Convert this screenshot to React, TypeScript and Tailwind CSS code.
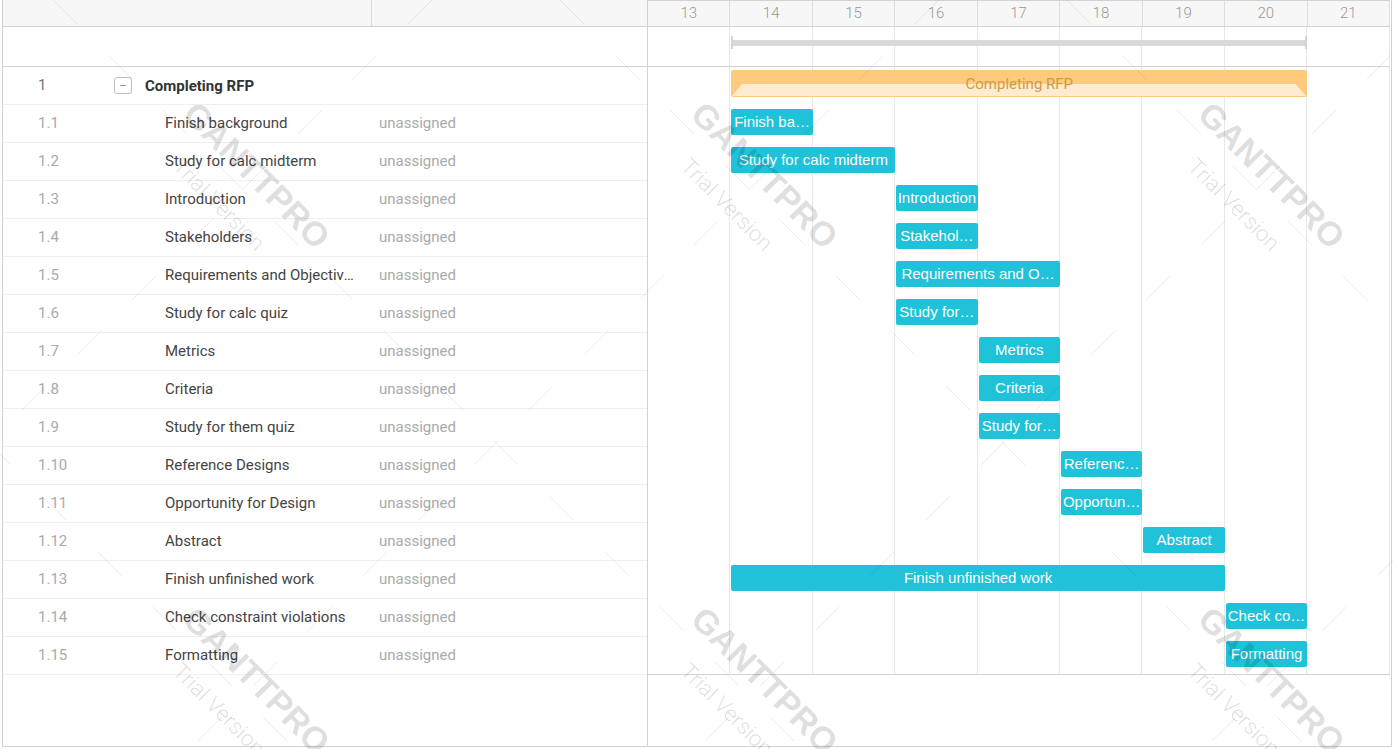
import React from "react";

const DAY = 82.4;

type Task = { id: string; name: string; label: string; start: number; dur: number };

const tasks: Task[] = [
  { id: "1.1", name: "Finish background", label: "Finish ba…", start: 14, dur: 1 },
  { id: "1.2", name: "Study for calc midterm", label: "Study for calc midterm", start: 14, dur: 2 },
  { id: "1.3", name: "Introduction", label: "Introduction", start: 16, dur: 1 },
  { id: "1.4", name: "Stakeholders", label: "Stakehol…", start: 16, dur: 1 },
  { id: "1.5", name: "Requirements and Objectives", label: "Requirements and O…", start: 16, dur: 2 },
  { id: "1.6", name: "Study for calc quiz", label: "Study for…", start: 16, dur: 1 },
  { id: "1.7", name: "Metrics", label: "Metrics", start: 17, dur: 1 },
  { id: "1.8", name: "Criteria", label: "Criteria", start: 17, dur: 1 },
  { id: "1.9", name: "Study for them quiz", label: "Study for…", start: 17, dur: 1 },
  { id: "1.10", name: "Reference Designs", label: "Referenc…", start: 18, dur: 1 },
  { id: "1.11", name: "Opportunity for Design", label: "Opportun…", start: 18, dur: 1 },
  { id: "1.12", name: "Abstract", label: "Abstract", start: 19, dur: 1 },
  { id: "1.13", name: "Finish unfinished work", label: "Finish unfinished work", start: 14, dur: 6 },
  { id: "1.14", name: "Check constraint violations", label: "Check co…", start: 20, dur: 1 },
  { id: "1.15", name: "Formatting", label: "Formatting", start: 20, dur: 1 },
];

const days = [13, 14, 15, 16, 17, 18, 19, 20, 21];

const gridBg =
  "bg-[repeating-linear-gradient(to_right,transparent_0px,transparent_81.4px,#e8e8e8_81.4px,#e8e8e8_82.4px)]";

function Watermark() {
  const clusters = [
    [242, 190],
    [750, 190],
    [1257, 190],
    [242, 695],
    [750, 695],
    [1257, 695],
  ];
  const back: number[] = [];
  for (let k = -2; k <= 3; k++) back.push(53 + 507 * k);
  const fwd: number[] = [];
  for (let k = 0; k <= 4; k++) fwd.push(432 + 507 * k);
  return (
    <svg
      className="absolute inset-0 pointer-events-none"
      width={1393}
      height={749}
      viewBox="0 0 1393 749"
    >
      <g stroke="#000" strokeOpacity={0.08} strokeWidth={1} strokeDasharray="34 44">
        {back.map((c) => (
          <line key={"b" + c} x1={c} y1={0} x2={c + 749} y2={749} />
        ))}
        {fwd.map((c) => (
          <line key={"f" + c} x1={c} y1={0} x2={c - 749} y2={749} />
        ))}
      </g>
      {clusters.map(([cx, cy]) => (
        <g key={cx + "-" + cy} transform={`translate(${cx} ${cy}) rotate(45)`}>
          <text
            x={0}
            y={-9}
            textAnchor="middle"
            fontFamily="'Liberation Sans', Arial, sans-serif"
            fontWeight={700}
            fontSize={34}
            fill="#000"
            fillOpacity={0.14}
          >
            GANTTPRO
          </text>
          <text
            x={-6}
            y={34}
            textAnchor="middle"
            fontFamily="'Roboto', sans-serif"
            fontWeight={300}
            fontSize={22}
            fill="#000"
            fillOpacity={0.14}
          >
            Trial Version
          </text>
        </g>
      ))}
    </svg>
  );
}

export default function App() {
  return (
    <div className="relative w-[1393px] h-[749px] bg-white overflow-hidden font-['Roboto',sans-serif]">
      <div className="ml-[2px] w-[1390px] h-[747px] border-l border-r border-b border-[#d2d2d2] flex">
        {/* Left grid */}
        <div className="w-[645px] shrink-0 border-r border-[#d2d2d2] flex flex-col">
          <div className="h-[27px] flex bg-[#f7f7f7] border-b border-[#d2d2d2]">
            <div className="w-[369px] border-r border-[#dadada]" />
            <div className="flex-1" />
          </div>
          <div className="h-[40px] border-b border-[#d2d2d2]" />
          <div className="h-[38px] flex items-center border-b border-[#efefef] text-[15px]">
            <div className="w-[111px] pl-[35px] text-[#777]">1</div>
            <div className="w-[258px] flex items-center">
              <div className="w-[18px] h-[17px] border border-[#bdbdbd] rounded-[3px] flex items-center justify-center">
                <div className="w-[6px] h-px bg-[#999]" />
              </div>
              <span className="ml-[13px] font-bold text-[#333] mt-px">Completing RFP</span>
            </div>
          </div>
          {tasks.map((t) => (
            <div
              key={t.id}
              className="h-[38px] flex items-center border-b border-[#efefef] text-[15px]"
            >
              <div className="w-[111px] pl-[35px] text-[#aaa]">{t.id}</div>
              <div className="w-[258px] pl-[51px] pr-[14px] text-[#444] truncate">{t.name}</div>
              <div className="pl-[7px] text-[#aaa]">unassigned</div>
            </div>
          ))}
          <div className="flex-1" />
        </div>

        {/* Right gantt */}
        <div className="flex-1 flex flex-col">
          <div className="w-[742px] h-[27px] grid grid-cols-9 bg-[#f7f7f7] border-t border-b border-[#d2d2d2]">
            {days.map((d) => (
              <div
                key={d}
                className="border-r border-[#dcdcdc] flex items-center justify-center text-[15px] text-[#999] font-light"
              >
                {d}
              </div>
            ))}
          </div>
          <div className={`w-[742px] h-[40px] border-b border-[#d2d2d2] pt-[9px] ${gridBg}`}>
            <div
              className="relative h-[13px] flex items-center"
              style={{ marginLeft: DAY + 1, width: DAY * 7 - 1 }}
            >
              <div className="w-[2px] h-[13px] bg-[#d4d4d4]" />
              <div className="flex-1 h-[6px] bg-[#d9d9d9]" />
              <div className="w-[2px] h-[13px] bg-[#d4d4d4]" />
            </div>
          </div>
          <div className={`w-[742px] h-[608px] border-b border-[#d2d2d2] ${gridBg}`}>
            <div className="h-[38px] pt-[3px]">
              <div
                className="relative h-[27px] bg-[#ffca7b] rounded-[2px] overflow-hidden"
                style={{ marginLeft: DAY + 1, width: DAY * 7 - 1 }}
              >
                <svg
                  className="absolute inset-0"
                  width="100%"
                  height="100%"
                  viewBox="0 0 575 27"
                  preserveAspectRatio="none"
                >
                  <polygon points="11,14 564,14 574,26 1,26" fill="#ffecd0" />
                </svg>
                <div className="relative h-full flex items-center justify-center pt-[2px] text-[15px] text-[#d39a3f]">
                  Completing RFP
                </div>
              </div>
            </div>
            {tasks.map((t) => (
              <div key={t.id} className="h-[38px] pt-[4px]">
                <div
                  className="h-[26px] bg-[#1fc2d8] rounded-[2px] text-center text-white text-[15px] leading-[26px] whitespace-nowrap overflow-hidden font-['Liberation_Sans',Arial,sans-serif]"
                  style={{ marginLeft: (t.start - 13) * DAY + 1, width: t.dur * DAY - 1 }}
                >
                  {t.label}
                </div>
              </div>
            ))}
          </div>
          <div className="flex-1" />
        </div>
      </div>
      <Watermark />
    </div>
  );
}
